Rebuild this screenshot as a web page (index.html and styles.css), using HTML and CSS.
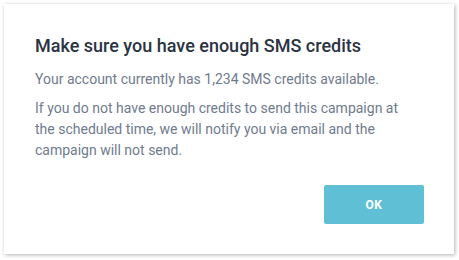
FILE: index.html
```html
<!DOCTYPE html>
<html>
<head>
<meta charset="utf-8">
<link rel="stylesheet" href="styles.css">
</head>
<body>
<div class="modal">
  <h1 class="title">Make sure you have enough SMS credits</h1>
  <p class="text">Your account currently has 1,234 SMS credits available.</p>
  <p class="text">If you do not have enough credits to send this campaign at the scheduled time, we will notify you via email and the campaign will not send.</p>
  <div class="actions">
    <button class="btn">OK</button>
  </div>
</div>
</body>
</html>
```
FILE: styles.css
```css
html, body {
  margin: 0;
  padding: 0;
  background: #ffffff;
}
body {
  padding: 4px;
  font-family: Roboto, "Liberation Sans", sans-serif;
}
.modal {
  box-sizing: border-box;
  width: 450px;
  height: 250px;
  background: #fff;
  box-shadow: 1px 1px 4px rgba(0, 0, 0, 0.3);
  padding: 30px 30px 30px 31px;
  display: flex;
  flex-direction: column;
}
.title {
  margin: 0;
  font-size: 18px;
  font-weight: 500;
  line-height: 24px;
  color: #2a3342;
}
.text {
  margin: 8px 0 0;
  max-width: 370px;
  font-size: 14px;
  line-height: 21px;
  color: #6f7b8e;
}
.title + .text {
  margin-top: 11px;
}
.actions {
  margin-top: auto;
  display: flex;
  justify-content: flex-end;
}
.btn {
  width: 100px;
  height: 39px;
  border: none;
  border-radius: 2px;
  background: #5fbfd4;
  color: #fff;
  font-family: Roboto, "Liberation Sans", sans-serif;
  font-weight: 700;
  font-size: 12px;
  letter-spacing: 0.5px;
  padding: 0;
}
```
